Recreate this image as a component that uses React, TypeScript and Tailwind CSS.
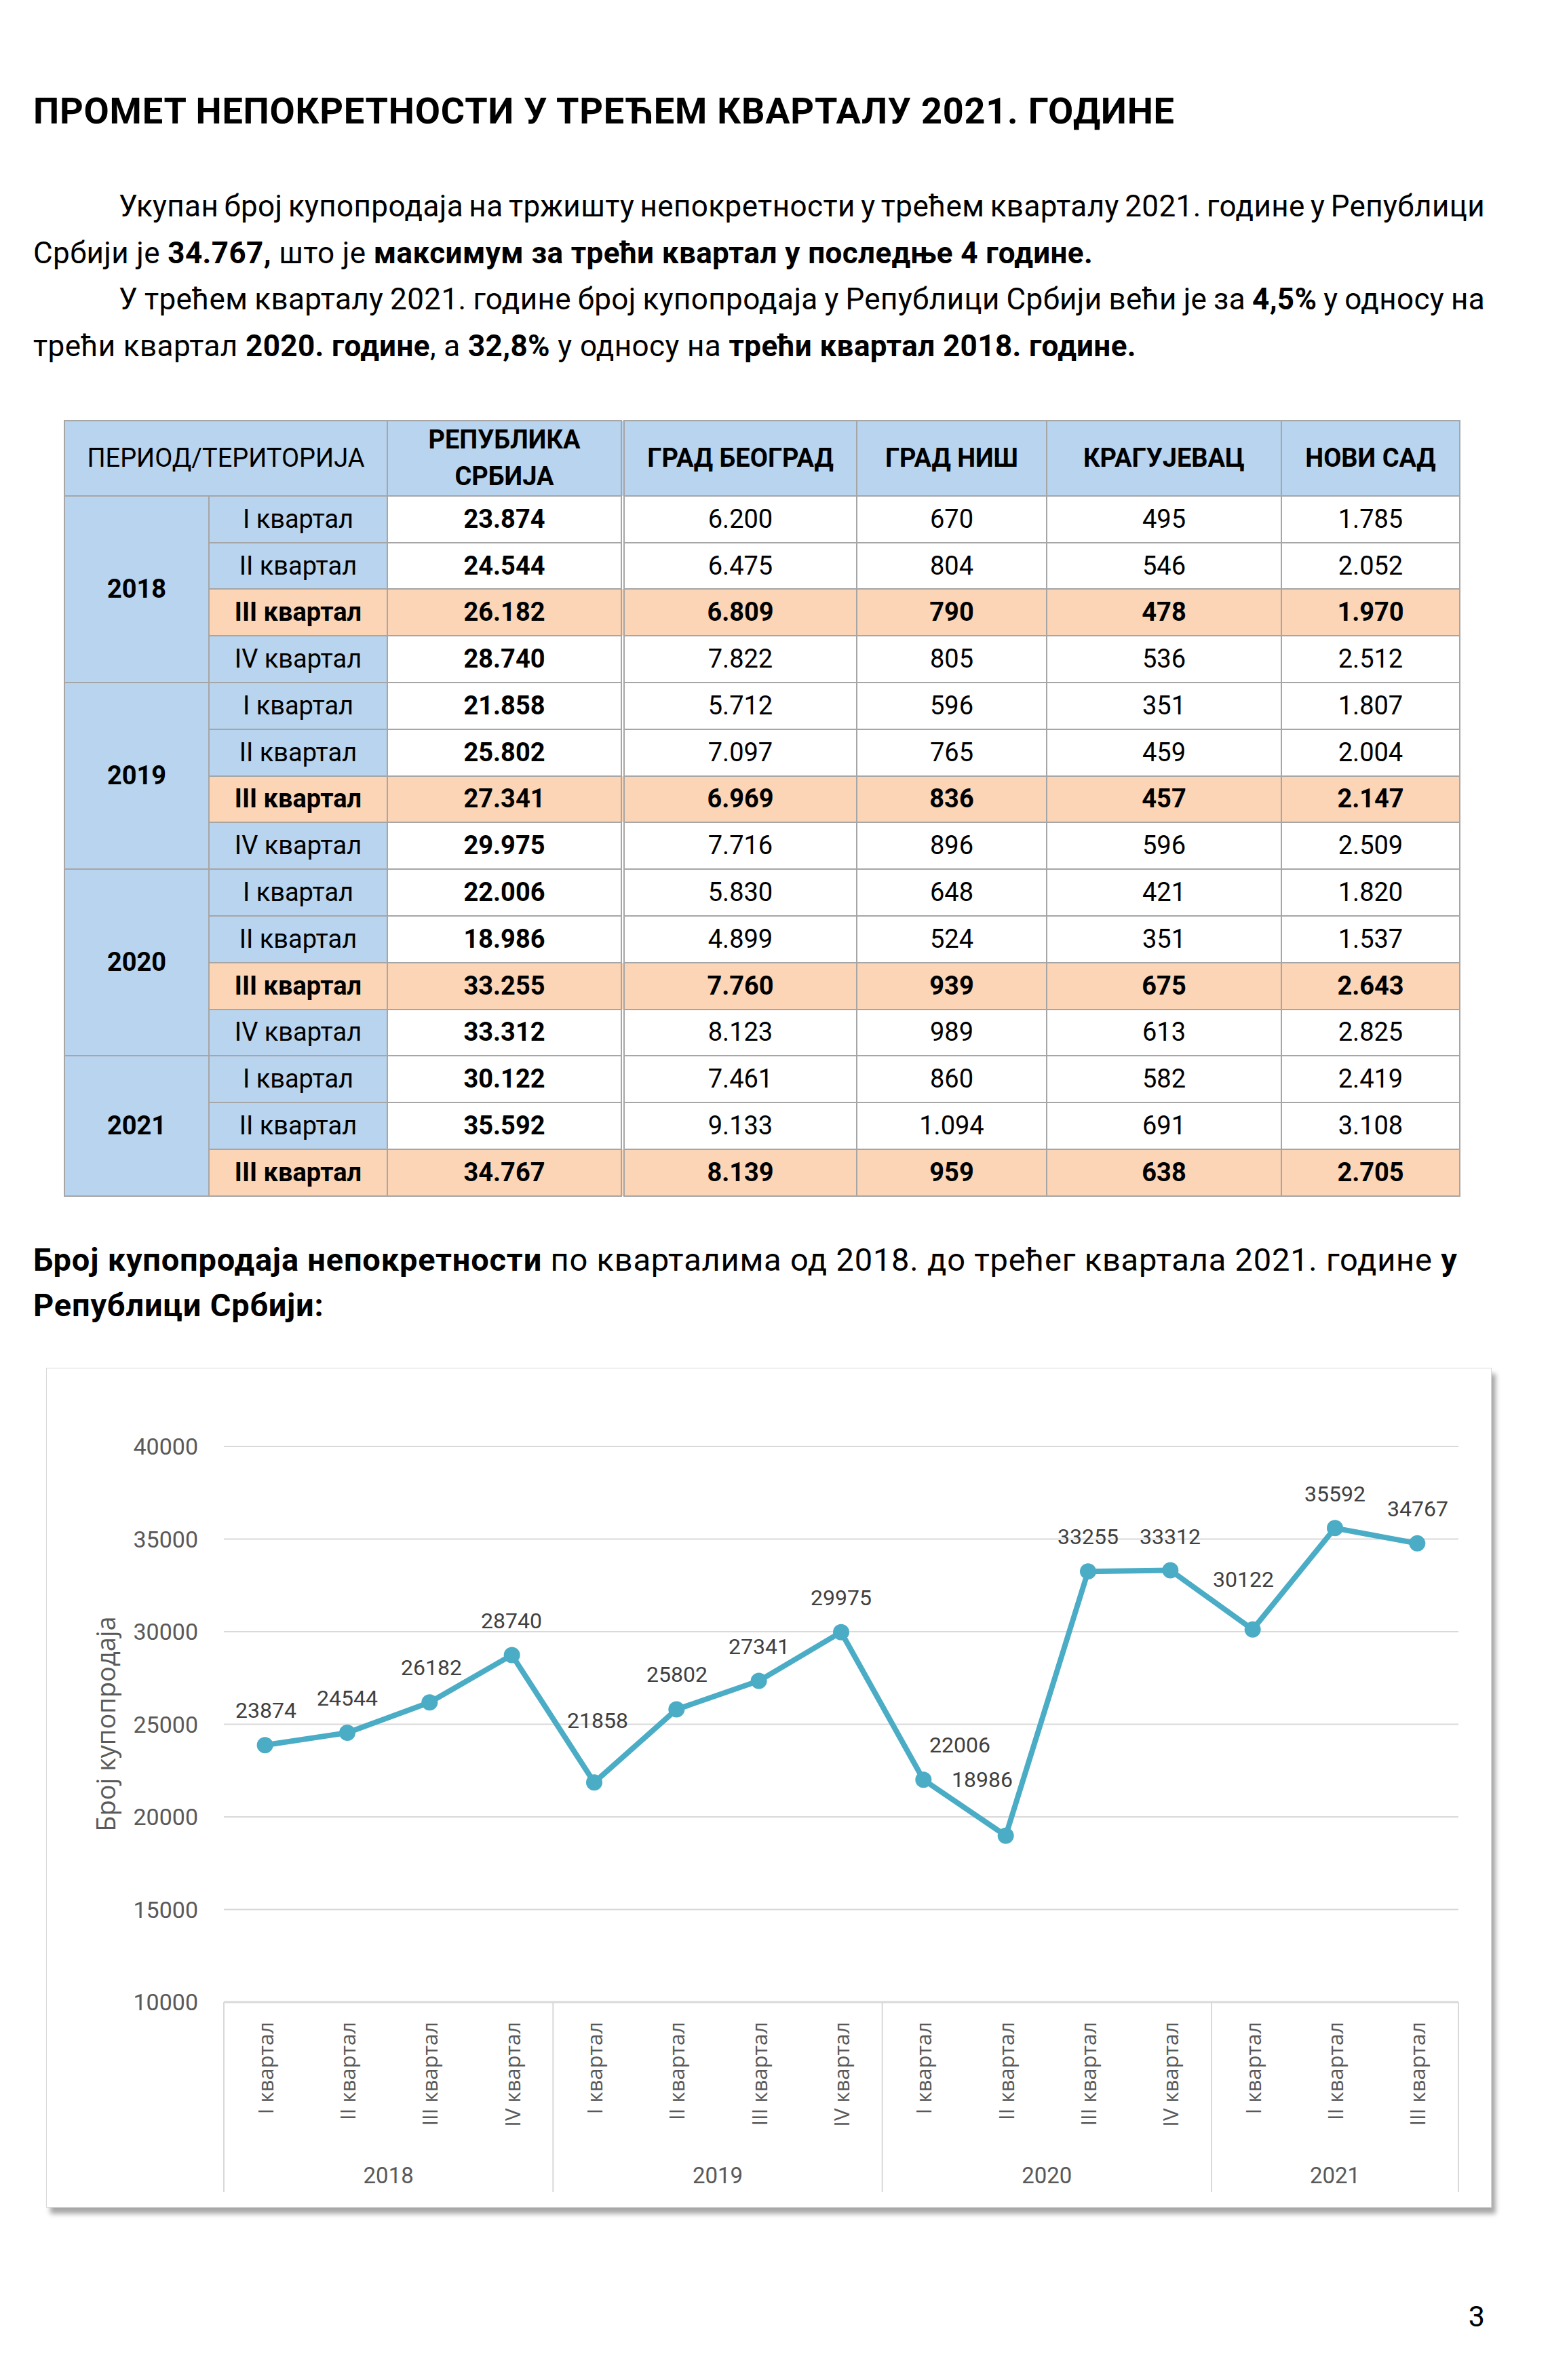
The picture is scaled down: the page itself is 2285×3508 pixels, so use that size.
import React from "react";

const rows = [
  { year: "2018", q: "I", v: ["23.874", "6.200", "670", "495", "1.785"] },
  { year: "2018", q: "II", v: ["24.544", "6.475", "804", "546", "2.052"] },
  { year: "2018", q: "III", v: ["26.182", "6.809", "790", "478", "1.970"] },
  { year: "2018", q: "IV", v: ["28.740", "7.822", "805", "536", "2.512"] },
  { year: "2019", q: "I", v: ["21.858", "5.712", "596", "351", "1.807"] },
  { year: "2019", q: "II", v: ["25.802", "7.097", "765", "459", "2.004"] },
  { year: "2019", q: "III", v: ["27.341", "6.969", "836", "457", "2.147"] },
  { year: "2019", q: "IV", v: ["29.975", "7.716", "896", "596", "2.509"] },
  { year: "2020", q: "I", v: ["22.006", "5.830", "648", "421", "1.820"] },
  { year: "2020", q: "II", v: ["18.986", "4.899", "524", "351", "1.537"] },
  { year: "2020", q: "III", v: ["33.255", "7.760", "939", "675", "2.643"] },
  { year: "2020", q: "IV", v: ["33.312", "8.123", "989", "613", "2.825"] },
  { year: "2021", q: "I", v: ["30.122", "7.461", "860", "582", "2.419"] },
  { year: "2021", q: "II", v: ["35.592", "9.133", "1.094", "691", "3.108"] },
  { year: "2021", q: "III", v: ["34.767", "8.139", "959", "638", "2.705"] },
];

const yearSpan: Record<string, number> = { "2018": 4, "2019": 4, "2020": 4, "2021": 3 };

// chart data, label centers are relative to the chart box
const points = [
  { v: 23874, lx: 324, ly: 505 },
  { v: 24544, lx: 444, ly: 487 },
  { v: 26182, lx: 568, ly: 442 },
  { v: 28740, lx: 686, ly: 373 },
  { v: 21858, lx: 813, ly: 520 },
  { v: 25802, lx: 930, ly: 452 },
  { v: 27341, lx: 1051, ly: 411 },
  { v: 29975, lx: 1172, ly: 339 },
  { v: 22006, lx: 1347, ly: 556 },
  { v: 18986, lx: 1380, ly: 607 },
  { v: 33255, lx: 1536, ly: 249 },
  { v: 33312, lx: 1657, ly: 249 },
  { v: 30122, lx: 1765, ly: 312 },
  { v: 35592, lx: 1900, ly: 186 },
  { v: 34767, lx: 2022, ly: 208 },
];
const quarters = ["I", "II", "III", "IV", "I", "II", "III", "IV", "I", "II", "III", "IV", "I", "II", "III"];

const X0 = 262;
const STEP = 1820 / 15;
const yFor = (v: number) => 935 - (v - 10000) * (819 / 30000);
const xFor = (i: number) => X0 + STEP * (i + 0.5);

function Chart() {
  const line = points.map((p, i) => `${xFor(i)},${yFor(p.v)}`).join(" ");
  return (
    <svg width={2129} height={1236} viewBox="1 1 2129 1236" className="block">
      {[40000, 35000, 30000, 25000, 20000, 15000].map((g) => (
        <line key={g} x1={X0} x2={2082} y1={yFor(g)} y2={yFor(g)} stroke="#d9d9d9" strokeWidth={2} />
      ))}
      {[40000, 35000, 30000, 25000, 20000, 15000, 10000].map((g) => (
        <text
          key={g}
          x={224}
          y={yFor(g)}
          textAnchor="end"
          dominantBaseline="central"
          fontFamily="Roboto, sans-serif"
          fontSize={34}
          fill="#595959"
        >
          {g}
        </text>
      ))}
      <text
        transform="translate(87 525) rotate(-90)"
        textAnchor="middle"
        dominantBaseline="central"
        fontFamily="'Open Sans', sans-serif"
        fontSize={38}
        fill="#595959"
      >
        Број купопродаја
      </text>

      {/* category axis */}
      <line x1={X0} x2={2082} y1={935} y2={935} stroke="#d9d9d9" strokeWidth={3} />
      {[0, 4, 8, 12, 15].map((k) => (
        <line key={k} x1={X0 + STEP * k} x2={X0 + STEP * k} y1={935} y2={1215} stroke="#d9d9d9" strokeWidth={2} />
      ))}
      {quarters.map((q, i) => (
        <text
          key={i}
          transform={`translate(${xFor(i)} 964) rotate(-90)`}
          textAnchor="end"
          dominantBaseline="central"
          fontFamily="'Open Sans', sans-serif"
          fontSize={31}
          fill="#595959"
        >
          {q} квартал
        </text>
      ))}
      {[
        { t: "2018", k: 0, n: 4 },
        { t: "2019", k: 4, n: 4 },
        { t: "2020", k: 8, n: 4 },
        { t: "2021", k: 12, n: 3 },
      ].map((y) => (
        <text
          key={y.t}
          x={X0 + STEP * (y.k + y.n / 2)}
          y={1190}
          textAnchor="middle"
          dominantBaseline="central"
          fontFamily="Roboto, sans-serif"
          fontSize={33}
          fill="#595959"
        >
          {y.t}
        </text>
      ))}

      {/* series */}
      <polyline points={line} fill="none" stroke="#4bacc6" strokeWidth={8} strokeLinejoin="round" />
      {points.map((p, i) => (
        <circle key={i} cx={xFor(i)} cy={yFor(p.v)} r={12} fill="#4bacc6" />
      ))}
      {points.map((p, i) => (
        <text
          key={i}
          x={p.lx}
          y={p.ly}
          textAnchor="middle"
          dominantBaseline="central"
          fontFamily="Roboto, sans-serif"
          fontSize={32}
          fill="#404040"
        >
          {p.v}
        </text>
      ))}
    </svg>
  );
}

export default function App() {
  const cell = "border-2 border-[#a6a6a6] text-center align-middle p-0";
  return (
    <div className="w-[2285px] h-[3508px] bg-white text-black font-['Roboto',sans-serif]">
      <div className="pl-[49px] pr-[96px] pt-[131px]">
        <h1 className="text-[54px] font-bold leading-[65px] tracking-[0.8px]">
          ПРОМЕТ НЕПОКРЕТНОСТИ У ТРЕЋЕМ КВАРТАЛУ 2021. ГОДИНЕ
        </h1>

        <div className="mt-[74px] text-[44px] leading-[68.7px] tracking-[0.4px]">
          {/* justified lines get negative word spacing so they never wrap */}
          <p className="pl-[126px] text-justify [text-align-last:justify] [word-spacing:-10px]">
            Укупан број купопродаја на тржишту непокретности у трећем кварталу 2021. године у Републици
          </p>
          <p>
            Србији је <b>34.767,</b> што је <b>максимум за трећи квартал у последње 4 године.</b>
          </p>
          <p className="pl-[126px] text-justify [text-align-last:justify] [word-spacing:-10px]">
            У трећем кварталу 2021. године број купопродаја у Републици Србији већи је за <b>4,5%</b> у односу на
          </p>
          <p>
            трећи квартал <b>2020. године</b>, а <b>32,8%</b> у односу на <b>трећи квартал 2018. године.</b>
          </p>
        </div>

        <table className="ml-[45px] mt-[74px] border-collapse table-fixed w-[2057px] text-[38px]">
          <colgroup>
            <col className="w-[213px]" />
            <col className="w-[263px]" />
            <col className="w-[347px]" />
            <col className="w-[345px]" />
            <col className="w-[280px]" />
            <col className="w-[346px]" />
            <col className="w-[263px]" />
          </colgroup>
          <thead>
            <tr className="h-[111px] bg-[#b8d4ee]">
              <th colSpan={2} className={`${cell} font-normal`}>
                ПЕРИОД/ТЕРИТОРИЈА
              </th>
              <th className={`${cell} font-bold leading-[54px]`}>
                РЕПУБЛИКА
                <br />
                СРБИЈА
              </th>
              <th className={`${cell} font-bold border-l-[6px] border-l-[#a6a6a6] border-double`}>ГРАД БЕОГРАД</th>
              <th className={`${cell} font-bold`}>ГРАД НИШ</th>
              <th className={`${cell} font-bold`}>КРАГУЈЕВАЦ</th>
              <th className={`${cell} font-bold`}>НОВИ САД</th>
            </tr>
          </thead>
          <tbody>
            {rows.map((r, i) => {
              const hi = r.q === "III";
              const first = i === 0 || rows[i - 1].year !== r.year;
              return (
                <tr key={i} className="h-[68.8px]">
                  {first && (
                    <td rowSpan={yearSpan[r.year]} className={`${cell} bg-[#b8d4ee] font-bold`}>
                      {r.year}
                    </td>
                  )}
                  <td className={`${cell} ${hi ? "bg-[#fbd5b5] font-bold" : "bg-[#b8d4ee]"}`}>
                    {r.q} квартал
                  </td>
                  {r.v.map((v, j) => (
                    <td
                      key={j}
                      className={`${cell} ${hi ? "bg-[#fbd5b5] font-bold" : "bg-white"} ${
                        j === 0 ? "font-bold" : ""
                      } ${j === 1 ? "border-l-[6px] border-double" : ""}`}
                    >
                      {v}
                    </td>
                  ))}
                </tr>
              );
            })}
          </tbody>
        </table>

        <p className="mt-[59px] text-[47px] leading-[67px] tracking-[0.8px]">
          <b>Број купопродаја непокретности</b> по кварталима од 2018. до трећег квартала 2021. године{" "}
          <b>у</b>
          <br />
          <b>Републици Србији:</b>
        </p>

        <div className="ml-[19px] mt-[59px] w-[2131px] h-[1238px] border border-[#d9d9d9] bg-white shadow-[6px_9px_7px_rgba(0,0,0,0.35)]">
          <Chart />
        </div>

        <p className="mt-[130px] text-right text-[43px] leading-[60px]">3</p>
      </div>
    </div>
  );
}
